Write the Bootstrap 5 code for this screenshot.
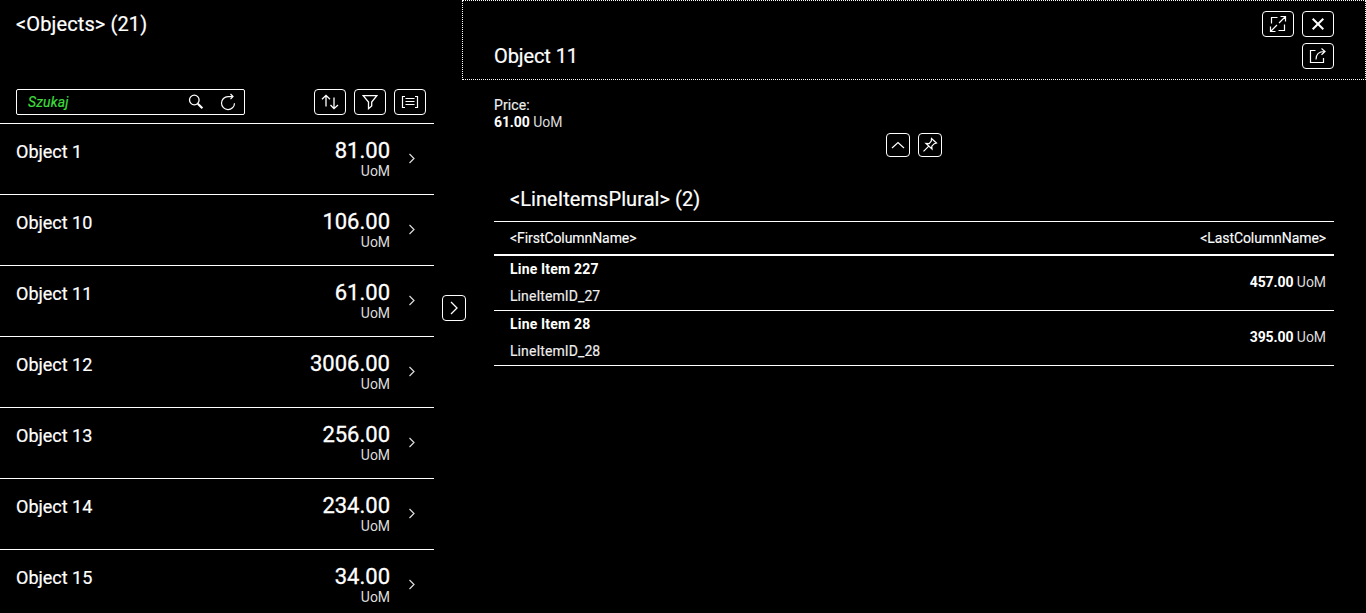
<!DOCTYPE html>
<html lang="pl">
<head>
<meta charset="utf-8">
<meta name="viewport" content="width=device-width, initial-scale=1">
<title>Objects</title>
<link href="https://cdn.jsdelivr.net/npm/bootstrap@5.3.0/dist/css/bootstrap.min.css" rel="stylesheet">
<style>
body{background:#000;color:#fff;font-family:Roboto,"Noto Sans",sans-serif;font-size:14px;line-height:17px}
.app{height:100vh}
.master{width:434px;height:100vh}
.splitter{width:28px}
.title{font-size:20px;line-height:24px;font-weight:400;margin:0;white-space:nowrap;-webkit-text-stroke:.2px #fff}
.t-master{letter-spacing:.12px}
.t-detail{letter-spacing:-.1px;margin-top:1px}
.t-table{letter-spacing:.06px}
.master-head{height:48px}
.toolbar{height:27px;margin:41px -8px 0 0;padding-bottom:1px}
.list-top{height:124px;border-bottom:1px solid #fff}
.search{width:229px;height:26px;border:1px solid #fff;border-radius:2px}
.search input{width:150px;color:#3f3;font-style:italic;padding:0 0 0 11px;background:none;border:0;height:24px;font-size:14px;letter-spacing:.15px}
.search input::placeholder{color:#3ddc3d;opacity:1;-webkit-text-stroke:.2px #3ddc3d}
.reload{margin:0 8px 0 16px}
.ibtn{width:32px;height:26px;padding:0;border:1px solid #fff;border-radius:4px;color:#fff;background:#000;display:flex;align-items:center;justify-content:center;flex:none}
.ibtn-s{width:24px;margin:2px 0 0 8px}
.ibtn-q{width:24px;height:24px}
svg{fill:none;stroke:currentColor;stroke-width:1.2;flex:none;display:block}
.orow{height:71px;border:0;border-bottom:1px solid #fff;border-radius:0;background:#000;color:#fff;padding:17px 18px 0 16px;flex:none}
.oname{font-size:18px;line-height:22px;-webkit-text-stroke:.2px #fff}
.onum{font-size:22px;line-height:20px;margin-bottom:2px;-webkit-text-stroke:.3px #fff}
.unit{color:#ddd;letter-spacing:-.05px}
.chev{margin:10px 0 0 18px;color:#ddd}
.detail-head{height:80px;border:1px dotted #fff;padding:10px 31px 0}
.head-line{margin-top:6px}
.body-d{padding:17px 32px 0}
.cap{color:#eee;-webkit-text-stroke:.15px #eee;letter-spacing:.08px}
.quick{height:24px;margin-top:2px}
.section-title{margin-top:30px}
.grid-t{border-top:1px solid #fff;margin-top:10px}
.grid-head{height:34px;border-bottom:2px solid #fff;padding:0 8px 0 16px}
.grid-head span{-webkit-text-stroke:.15px #eee;letter-spacing:-.07px}
.grid-row{height:55px;border-bottom:1px solid #fff;padding:0 8px 0 16px}
.grid-row .qty{margin-top:-2px}
.b7{font-weight:700;letter-spacing:-.1px}
.li{margin-bottom:10px;letter-spacing:.18px}
</style>
</head>
<body class="overflow-hidden">
<div class="app d-flex">
  <section class="master d-flex flex-column overflow-hidden flex-shrink-0">
    <header class="list-top flex-shrink-0 px-3">
      <div class="master-head d-flex align-items-center"><h1 class="title t-master">&lt;Objects&gt; (21)</h1></div>
      <div class="toolbar d-flex align-items-center">
        <div class="search d-flex align-items-center">
          <input type="text" placeholder="Szukaj" aria-label="Szukaj">
          <svg class="ms-auto" width="16" height="16" viewBox="0 0 16 16"><circle cx="6.300" cy="6" r="4.800" stroke-width="1.3"/><path d="M9.800 9.700l4.600 4.500" stroke-width="2.2"/></svg>
          <svg class="reload" width="16" height="18" viewBox="0 0 16 18"><path d="M12.500 3.600H8A6.500 6.500 0 1 0 14.500 10.200M10.500 1l2.500 2.600-2.500 2.500"/></svg>
        </div>
        <div class="d-flex gap-2 ms-auto">
          <button class="ibtn" aria-label="Sort"><svg width="18" height="16" viewBox="0 0 18 16"><path d="M5 12.500V1.500M1 5.300l4-4 4 4M13 3.500v11M9.500 11l3.500 3.700 4-3.700" stroke-width="1.3"/></svg></button>
          <button class="ibtn" aria-label="Filter"><svg width="16" height="16" viewBox="0 0 16 16"><path d="M1.200 1.700h13.600L9.700 8v4l-3.200 2.700V8z" stroke-width="1.3"/></svg></button>
          <button class="ibtn" aria-label="Group"><svg width="18" height="16" viewBox="0 0 18 16"><path d="M4 2.500H1.500v11H4M14 2.500h2.500v11H14M4.500 4.500h9M4.500 7.500h9M4.500 10.500h9"/></svg></button>
        </div>
      </div>
    </header>
    <div id="objects" class="list-group list-group-flush"></div>
  </section>
  <div class="splitter flex-shrink-0 d-flex align-items-center position-relative z-1">
    <button class="ibtn ibtn-s" aria-label="Toggle"><svg width="12" height="16" viewBox="0 0 12 16"><path d="M3 2l6 6-6 6" stroke-width="1.3"/></svg></button>
  </div>
  <main class="flex-grow-1">
    <header class="detail-head">
      <div class="d-flex justify-content-end gap-2">
        <button class="ibtn" aria-label="Full screen"><svg width="18" height="18" viewBox="0 0 18 18"><path d="M8.500 2.500h-6v6M15.500 9.500v6h-6M10 8l6-6M11.500 1.500h5v5M8 10l-6 6M1.500 11.500v5h5"/></svg></button>
        <button class="ibtn" aria-label="Close"><svg width="16" height="16" viewBox="0 0 16 16"><path d="M2.700 2.700l10.600 10.600M13.300 2.700l-10.600 10.600" stroke-width="2"/></svg></button>
      </div>
      <div class="head-line d-flex justify-content-between">
        <h2 class="title t-detail">Object 11</h2>
        <button class="ibtn" aria-label="Share"><svg width="18" height="18" viewBox="0 0 18 18"><path d="M6.500 3.500h-5v12h13v-4.500M7 12.500c0-5 2.500-8 8.500-8M12.500 1.500l3.500 3-3.500 3.300"/></svg></button>
      </div>
    </header>
    <div class="body-d">
      <div class="cap">Price:</div>
      <div><span class="b7">61.00</span> <span class="unit">UoM</span></div>
      <div class="quick d-flex justify-content-center gap-2">
        <button class="ibtn ibtn-q" aria-label="Collapse"><svg width="16" height="16" viewBox="0 0 16 16"><path d="M2 11l6-5.500 6 5.500"/></svg></button>
        <button class="ibtn ibtn-q" aria-label="Pin"><svg width="16" height="16" viewBox="0 0 16 16"><path d="M9.500 1.500l5 4.500-2.200.7-2.500 2.500.2 2.800L4 6.500l3.200.2L9.300 4zM6.500 9.300L1.500 14.300"/></svg></button>
      </div>
      <h3 class="title t-table section-title ps-3">&lt;LineItemsPlural&gt; (2)</h3>
      <div class="grid-t">
        <div class="grid-head d-flex align-items-center justify-content-between"><span>&lt;FirstColumnName&gt;</span><span>&lt;LastColumnName&gt;</span></div>
        <div class="grid-row d-flex align-items-center justify-content-between"><div><div class="b7 li">Line Item 227</div><div class="cap">LineItemID_27</div></div><div class="qty"><span class="b7">457.00</span> <span class="unit">UoM</span></div></div>
        <div class="grid-row d-flex align-items-center justify-content-between"><div><div class="b7 li">Line Item 28</div><div class="cap">LineItemID_28</div></div><div class="qty"><span class="b7">395.00</span> <span class="unit">UoM</span></div></div>
      </div>
    </div>
  </main>
</div>
<script>
const rows=[["1","81.00"],["10","106.00"],["11","61.00"],["12","3006.00"],["13","256.00"],["14","234.00"],["15","34.00"]];
document.getElementById("objects").innerHTML=rows.map(([n,v])=>`<div class="orow d-flex align-items-start"><span class="oname">Object ${n}</span><div class="ms-auto text-end"><div class="onum">${v}</div><div class="unit">UoM</div></div><svg class="chev" width="8" height="14" viewBox="0 0 8 14"><path d="M1.500 3l4.500 4.500-4.500 4.500"/></svg></div>`).join("");
</script>
<script src="https://cdn.jsdelivr.net/npm/bootstrap@5.3.0/dist/js/bootstrap.bundle.min.js"></script>
</body>
</html>
